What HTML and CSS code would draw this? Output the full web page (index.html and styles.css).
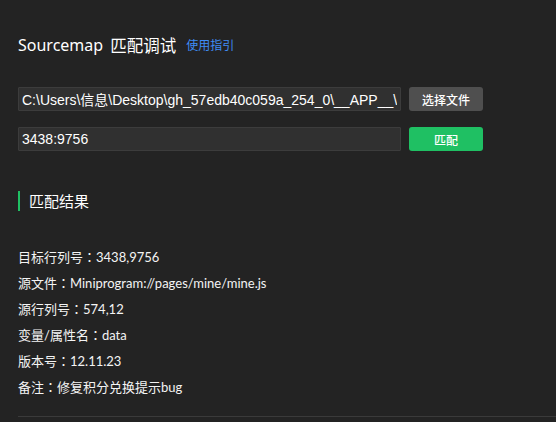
FILE: index.html
```html
<!DOCTYPE html>
<html lang="zh-CN">
<head>
<meta charset="utf-8">
<title>Sourcemap 匹配调试</title>
<link rel="stylesheet" href="styles.css">
</head>
<body>
<div class="page">
  <div class="title">
    <span class="title-text">Sourcemap</span><span class="title-cjk">匹配调试</span>
    <a class="guide" href="#">使用指引</a>
  </div>
  <div class="form">
    <div class="row">
      <input class="field" type="text" value="C:\Users\信息\Desktop\gh_57edb40c059a_254_0\__APP__\pages\mine\mine.js.map">
      <button class="btn btn-gray">选择文件</button>
    </div>
    <div class="row">
      <input class="field" type="text" value="3438:9756">
      <button class="btn btn-green">匹配</button>
    </div>
  </div>
  <div class="section-title">匹配结果</div>
  <div class="results">
    <div class="line">目标行列号<span class="colon" lang="zh-TW">：</span>3438,9756</div>
    <div class="line">源文件<span class="colon" lang="zh-TW">：</span>Miniprogram://pages/mine/mine.js</div>
    <div class="line">源行列号<span class="colon" lang="zh-TW">：</span>574,12</div>
    <div class="line">变量/属性名<span class="colon" lang="zh-TW">：</span>data</div>
    <div class="line">版本号<span class="colon" lang="zh-TW">：</span>12.11.23</div>
    <div class="line">备注<span class="colon" lang="zh-TW">：</span>修复积分兑换提示bug</div>
  </div>
  <div class="divider"></div>
</div>
</body>
</html>
```

FILE: styles.css
```css
html, body {
  margin: 0;
  padding: 0;
  background: #232323;
  height: 100%;
  overflow: hidden;
}
.page {
  padding: 34px 0 0 18px;
  font-family: "Noto Sans", "Noto Sans CJK SC", sans-serif;
  color: #f2f2f2;
}
.title {
  height: 22px;
  line-height: 22px;
  display: flex;
  align-items: center;
  white-space: nowrap;
}
.title-text {
  font-size: 16px;
  color: #ffffff;
}
.title-cjk {
  margin-left: 7px;
  font-size: 16.5px;
  color: #ffffff;
  font-family: "Noto Sans CJK SC", sans-serif;
}
.guide {
  margin-left: 10px;
  font-size: 12px;
  color: #3f8cf5;
  text-decoration: none;
  font-family: "Noto Sans CJK SC", sans-serif;
}
.form {
  margin-top: 31px;
  display: flex;
  flex-direction: column;
  gap: 16px;
}
.row {
  display: flex;
  gap: 8px;
  height: 24px;
}
.field {
  box-sizing: border-box;
  width: 383px;
  height: 24px;
  margin: 0;
  padding: 0 3px;
  background: #303030;
  border: 1px solid #3c3c3c;
  border-radius: 1px;
  color: #ffffff;
  font-family: "Liberation Sans", Arial, "Noto Sans CJK SC", sans-serif;
  font-size: 14px;
  outline: none;
}
.btn {
  box-sizing: border-box;
  width: 74px;
  height: 24px;
  margin: 0;
  padding: 0;
  border: none;
  border-radius: 3px;
  color: #ffffff;
  font-family: "Noto Sans CJK SC", sans-serif;
  font-size: 12px;
  font-weight: 500;
}
.btn-gray {
  background: #4f4f4f;
}
.btn-green {
  background: #1fc063;
}
.section-title {
  margin-top: 40px;
  height: 20px;
  line-height: 20px;
  border-left: 2px solid #1fc063;
  padding-left: 9px;
  font-family: "Noto Sans CJK SC", sans-serif;
  font-size: 15px;
  color: #ffffff;
}
.results {
  margin-top: 33px;
}
.line {
  height: 26px;
  line-height: 26px;
  font-size: 13px;
  font-family: "Lato", "Noto Sans CJK SC", sans-serif;
  color: #f4f4f4;
  white-space: nowrap;
}
.colon {
  font-family: "Noto Sans CJK TC", sans-serif;
}
.divider {
  margin-top: 16px;
  height: 1px;
  background: #3a3a3a;
}
```
